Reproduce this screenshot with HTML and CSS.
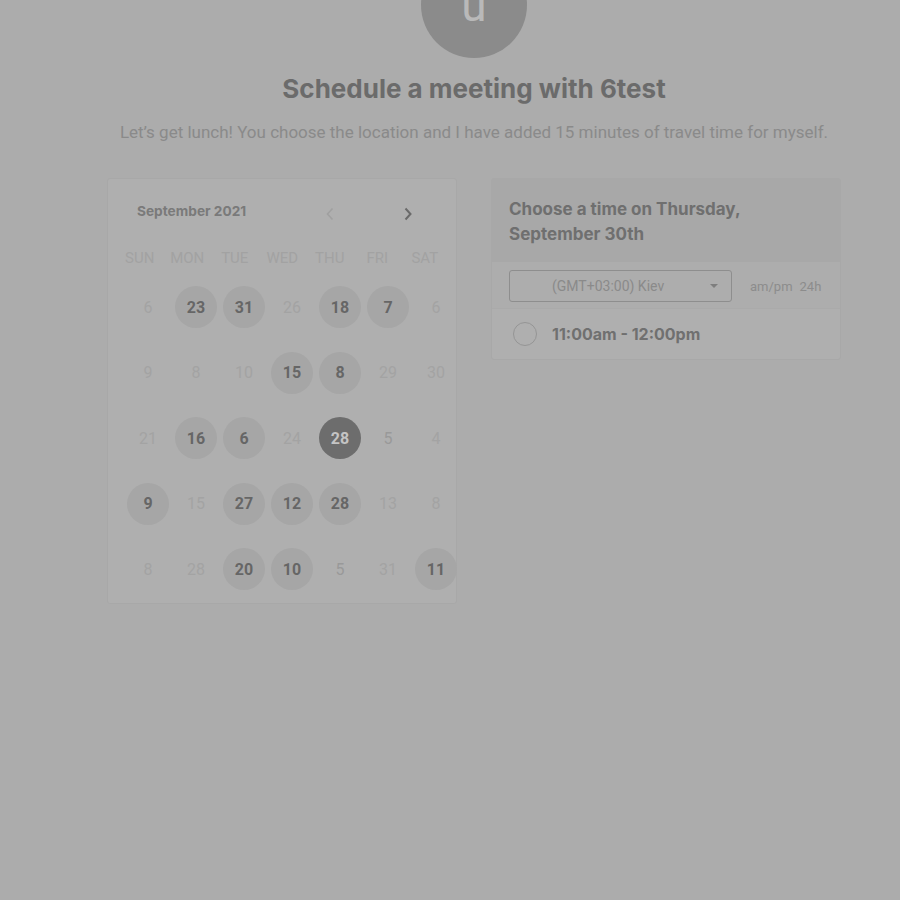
FILE: index.html
```html
<!DOCTYPE html>
<html lang="en">
<head>
    <meta charset="UTF-8">
    <meta name="viewport" content="width=device-width, initial-scale=1.0">
    <title>Schedule a meeting with 6test</title>
    <link rel="stylesheet" href="styles.css">
</head>
<body>
    <div class="page">
        <div class="avatar"><span>u</span></div>
        <h1 class="title">Schedule a meeting with 6test</h1>
        <p class="intro">Let’s get lunch! You choose the location and I have added 15 minutes of travel time for myself.</p>

        <div class="content">
            <div class="calendar">
                <div class="cal-head">
                    <span class="month">September 2021</span>
                    <span class="nav prev">
                        <svg width="10" height="14" viewBox="0 0 10 14"><path d="M7.5 1.5 L2.5 7 L7.5 12.5" fill="none" stroke="currentColor" stroke-width="1.6"/></svg>
                    </span>
                    <span class="nav next">
                        <svg width="10" height="14" viewBox="0 0 10 14"><path d="M2.5 1.5 L7.5 7 L2.5 12.5" fill="none" stroke="currentColor" stroke-width="2"/></svg>
                    </span>
                </div>
                <div class="weekdays">
                    <span>SUN</span><span>MON</span><span>TUE</span><span>WED</span><span>THU</span><span>FRI</span><span>SAT</span>
                </div>
                <div class="days">
                    <span class="day off">6</span><span class="day open">23</span><span class="day open">31</span><span class="day off">26</span><span class="day open">18</span><span class="day open">7</span><span class="day off">6</span>
                    <span class="day off">9</span><span class="day off">8</span><span class="day off">10</span><span class="day open">15</span><span class="day open">8</span><span class="day off">29</span><span class="day off">30</span>
                    <span class="day off">21</span><span class="day open">16</span><span class="day open">6</span><span class="day off">24</span><span class="day selected">28</span><span class="day mid">5</span><span class="day off">4</span>
                    <span class="day open">9</span><span class="day off">15</span><span class="day open">27</span><span class="day open">12</span><span class="day open">28</span><span class="day off">13</span><span class="day off">8</span>
                    <span class="day off">8</span><span class="day off">28</span><span class="day open">20</span><span class="day open">10</span><span class="day mid">5</span><span class="day off">31</span><span class="day open">11</span>
                </div>
            </div>

            <div class="times">
                <div class="times-head">Choose a time on Thursday,<br>September 30th</div>
                <div class="tz-row">
                    <div class="tz-select">
                        <span>(GMT+03:00) Kiev</span>
                        <span class="caret"></span>
                    </div>
                    <div class="format"><span>am/pm</span><span>24h</span></div>
                </div>
                <div class="slot">
                    <span class="radio"></span>
                    <span class="slot-label">11:00am - 12:00pm</span>
                </div>
            </div>
        </div>
    </div>
</body>
</html>
```

FILE: styles.css
```css
body {
    margin: 0;
    background-color: #acacac;
    font-family: Roboto, "Liberation Sans", sans-serif;
    overflow: hidden;
}
.page {
    padding-left: 48px;
    display: flex;
    flex-direction: column;
    align-items: center;
}
.avatar {
    width: 106px;
    height: 106px;
    margin-top: -48px;
    border-radius: 50%;
    background-color: #8b8b8b;
    display: flex;
    justify-content: center;
    align-items: center;
}
.avatar span {
    color: #b9b9b9;
    font-size: 46px;
    line-height: 1;
}
.title {
    margin: 15px 0 0;
    font-family: Inter, sans-serif;
    font-size: 26px;
    line-height: 32px;
    font-weight: 700;
    color: #6b6b6b;
}
.intro {
    margin: 16px 0 0;
    font-size: 17px;
    line-height: 22px;
    color: #8a8a8a;
}
.content {
    margin-top: 35px;
    display: flex;
    align-items: flex-start;
    gap: 34px;
}
.calendar {
    width: 350px;
    height: 426px;
    box-sizing: border-box;
    background-color: #afafaf;
    border: 1px solid #a8a8a8;
    border-radius: 3px;
    padding-top: 21px;
}
.cal-head {
    display: flex;
    align-items: center;
    height: 22px;
    padding-left: 29px;
}
.month {
    font-family: Inter, sans-serif;
    font-size: 13.7px;
    font-weight: 700;
    color: #7a7a7a;
    width: 188px;
}
.nav {
    display: flex;
    align-items: center;
    margin-top: 6px;
}
.prev {
    color: #a0a0a0;
    width: 78px;
}
.next {
    color: #6a6a6a;
}
.weekdays {
    margin-top: 26px;
    padding-left: 8px;
    display: grid;
    grid-template-columns: repeat(7, 47.5px);
    height: 20px;
    line-height: 20px;
    text-align: center;
    font-size: 15px;
    color: #a2a2a2;
}
.days {
    margin-top: 18px;
    padding-left: 16px;
    display: grid;
    grid-template-columns: repeat(7, 48px);
    grid-auto-rows: 42px;
    row-gap: 23.5px;
    justify-items: center;
}
.day {
    width: 42px;
    height: 42px;
    border-radius: 50%;
    display: flex;
    justify-content: center;
    align-items: center;
    font-size: 16px;
}
.day.off {
    color: #a3a3a3;
}
.day.mid {
    color: #999;
}
.day.open {
    background-color: #a6a6a6;
    color: #666;
    font-weight: 700;
}
.day.selected {
    background-color: #6d6d6d;
    color: #c4c4c4;
    font-weight: 700;
}
.times {
    width: 350px;
    box-sizing: border-box;
    background-color: #afafaf;
    border: 1px solid #a8a8a8;
    border-radius: 3px;
}
.times-head {
    background-color: #a8a8a8;
    padding: 18px 17px 15px;
    font-family: Inter, sans-serif;
    font-size: 17px;
    line-height: 25px;
    font-weight: 700;
    color: #6f6f6f;
}
.tz-row {
    display: flex;
    align-items: center;
    padding: 8px 17px 6px;
    background-color: #adadad;
    border-bottom: 1px solid #aaa;
}
.tz-select {
    width: 223px;
    height: 32px;
    box-sizing: border-box;
    border: 1px solid #8e8e8e;
    border-radius: 3px;
    display: flex;
    align-items: center;
    justify-content: space-between;
    padding: 0 13px 0 42px;
    font-size: 14px;
    color: #8a8a8a;
}
.caret {
    width: 0;
    height: 0;
    border-left: 4px solid transparent;
    border-right: 4px solid transparent;
    border-top: 4px solid #7e7e7e;
}
.format {
    margin-left: 18px;
    display: flex;
    gap: 7px;
    font-size: 13px;
    color: #8c8c8c;
}
.slot {
    display: flex;
    align-items: center;
    height: 50px;
    padding-left: 21px;
}
.radio {
    width: 22px;
    height: 22px;
    border: 1.5px solid #959595;
    border-radius: 50%;
}
.slot-label {
    margin-left: 15px;
    font-family: Inter, sans-serif;
    font-size: 16px;
    font-weight: 700;
    color: #707070;
}
```
